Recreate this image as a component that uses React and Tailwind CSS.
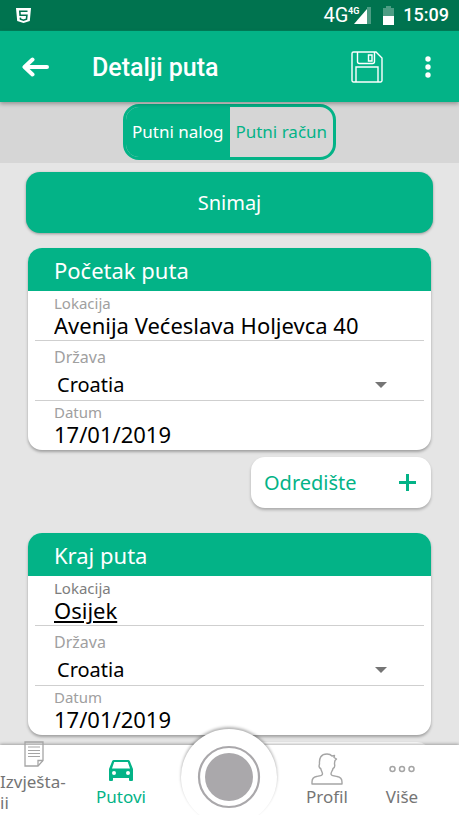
import { useState } from 'react';
import clsx from 'clsx';

const COUNTRIES = ['Croatia', 'Slovenia', 'Austria'];

function StatusBar() {
  return (
    <div className="flex h-[31px] shrink-0 items-center justify-between border-b border-[#007e59] bg-[#00734f] pl-4 pr-[10px] text-white">
      <svg width="15" height="15" viewBox="0 0 15 15" aria-hidden="true">
        <path d="M0 0h15l-1.2 13L7.5 15 1.2 13z" fill="#fff" />
        <path d="M11.5 3.2H3.8l.3 4h6.8l-.4 4-3 1-3-1-.2-1.6" fill="none" stroke="#00734f" strokeWidth="1.6" />
      </svg>
      <div className="flex items-center">
        <span className="font-[Roboto,sans-serif] text-xl leading-6">4G</span>
        <svg width="24" height="20" viewBox="0 0 24 20" aria-hidden="true">
          <path d="M19 2h4v17h-4z" fill="#4d9d84" />
          <path d="M19 4v15H6z" fill="#fff" />
          <text x="0" y="9" fill="#fff" fontFamily="Roboto, sans-serif" fontSize="9" fontWeight="700">4G</text>
        </svg>
        <svg className="ml-[11px]" width="11" height="19" viewBox="0 0 11 19" aria-hidden="true">
          <path d="M3 0h5v2h3v8H0V2h3z" fill="#4d9d84" />
          <path d="M0 10h11v9H0z" fill="#fff" />
        </svg>
        <span className="ml-[9px] font-[Roboto,sans-serif] text-lg font-medium leading-6">15:09</span>
      </div>
    </div>
  );
}

function TopBar() {
  return (
    <header className="relative z-10 flex h-[71px] shrink-0 items-center bg-[#03b387] pl-[22px] pr-6 text-white shadow-[0_2px_4px_rgba(0,0,0,0.3)]">
      <button type="button" aria-label="Natrag">
        <svg width="28" height="20" viewBox="0 0 28 20" fill="none" stroke="currentColor" strokeWidth="4" strokeLinecap="round" strokeLinejoin="round">
          <path d="M25 10H3M10.5 2.500L2.500 10l8 7.500" />
        </svg>
      </button>
      <h1 className="ml-[42px] flex-1 pt-[2px] font-[Roboto,sans-serif] text-[25px] font-medium">Detalji puta</h1>
      <button type="button" aria-label="Spremi">
        <svg width="32" height="32" viewBox="0 0 32 32" fill="none" stroke="currentColor" strokeWidth="1.4">
          <path d="M2.500 1H25l6 6v22.500a1.500 1.500 0 0 1-1.500 1.500h-27A1.500 1.500 0 0 1 1 29.500v-27A1.500 1.500 0 0 1 2.500 1z" />
          <path d="M6.500 1v9.500a2 2 0 0 0 2 2h13a2 2 0 0 0 2-2V1" />
          <path d="M17.500 4h3.500v6h-3.500z" />
          <path d="M5 31V16h22v15" />
        </svg>
      </button>
      <button type="button" aria-label="Izbornik" className="ml-[38px] px-1">
        <svg width="6" height="22" viewBox="0 0 6 22" fill="currentColor">
          <circle cx="3" cy="3" r="2.700" />
          <circle cx="3" cy="11" r="2.700" />
          <circle cx="3" cy="19" r="2.700" />
        </svg>
      </button>
    </header>
  );
}

function Segments({ value, onChange }) {
  return (
    <div className="flex h-[61px] shrink-0 justify-center bg-[#d6d6d6] pb-[3px] pt-[2px]">
      <div className="flex w-[213px] overflow-hidden rounded-2xl border-[3px] border-[#03b387] text-[17px]">
        {['Putni nalog', 'Putni račun'].map((label) => (
          <button
            key={label}
            type="button"
            onClick={() => onChange(label)}
            className={clsx(
              'flex-1 whitespace-nowrap',
              value === label ? 'bg-[#03b387] text-white' : 'text-[#03b387]'
            )}
          >
            {label}
          </button>
        ))}
      </div>
    </div>
  );
}

function TripCard({ id, title, location, underlined }) {
  return (
    <section className="overflow-hidden rounded-[14px] bg-white shadow-[0_2px_3px_rgba(0,0,0,0.3)]">
      <h2 className="h-[43px] bg-[#03b387] pl-[26px] text-[22px] leading-[44px] text-white">{title}</h2>
      <div className="px-[7px]">
        <div className="h-[50px] border-b border-[#cfcfcf] pl-[19px] pt-1">
          <label
            htmlFor={`${id}-location`}
            className={clsx('block text-[15px] leading-4', underlined ? 'text-[#7d7d7d]' : 'text-[#a0a0a0]')}
          >
            Lokacija
          </label>
          <input
            id={`${id}-location`}
            type="text"
            defaultValue={location}
            className={clsx('block h-7 w-full text-[22px] leading-7 text-black outline-none', underlined && 'underline')}
          />
        </div>
        <div className="h-[60px] border-b border-[#cfcfcf] pl-[19px] pt-1.5">
          <label htmlFor={`${id}-country`} className="block text-base leading-5 text-[#a0a0a0]">Država</label>
          <div className="flex items-center pr-[37px] pt-1">
            <select
              id={`${id}-country`}
              defaultValue="Croatia"
              className="h-7 flex-1 appearance-none bg-transparent pl-[3px] text-xl leading-7 text-black outline-none"
            >
              {COUNTRIES.map((c) => (
                <option key={c}>{c}</option>
              ))}
            </select>
            <svg width="12" height="6" viewBox="0 0 12 6" aria-hidden="true">
              <path d="M0 0h12L6 6z" fill="#757575" />
            </svg>
          </div>
        </div>
        <div className="h-[49px] pl-[19px] pt-[3px]">
          <label htmlFor={`${id}-date`} className="block text-[15px] leading-4 text-[#a0a0a0]">Datum</label>
          <input
            id={`${id}-date`}
            type="text"
            defaultValue="17/01/2019"
            className="block h-7 w-full text-[22px] leading-7 text-black outline-none"
          />
        </div>
      </div>
    </section>
  );
}

function AddDestination() {
  return (
    <button
      type="button"
      className="flex h-[51px] w-[180px] items-center justify-between rounded-[14px] bg-white pl-[13px] pr-[15px] text-xl text-[#03b387] shadow-[0_2px_3px_rgba(0,0,0,0.25)]"
    >
      Odredište
      <svg width="17" height="17" viewBox="0 0 17 17" stroke="currentColor" strokeWidth="3" aria-hidden="true">
        <path d="M8.500 0v17M0 8.500h17" />
      </svg>
    </button>
  );
}

function BottomNav() {
  return (
    <nav className="relative z-10 grid h-[70px] shrink-0 grid-cols-[68fr_106fr_110fr_86fr_64fr] bg-white pr-[25px] text-[17px] leading-[21px] text-[#757575] shadow-[0_-1px_3px_rgba(0,0,0,0.3)]">
      <a href="#izvjestaji" className="-mt-1 flex flex-col items-center">
        <svg width="20" height="26" viewBox="0 0 20 26" fill="none" stroke="#a5a5a5" strokeWidth="1.300" className="shrink-0">
          <path d="M1 1h18v18.500L14 25H1z" />
          <path d="M19 19.500h-5V25" />
          <path d="M4 6h12M4 9.500h12M4 12.500h12M4 15.500h12" strokeWidth="1" />
        </svg>
        <span className="mt-1 w-full">
          Izvješta-
          <br />
          ii
        </span>
      </a>
      <a href="#putovi" className="flex flex-col items-center pt-[15px] text-[#03b387]">
        <svg width="24" height="21" viewBox="0 0 24 21" fill="currentColor">
          <path
            fillRule="evenodd"
            d="M5 0h14a2 2 0 0 1 1.900 1.300L24 9v11a1 1 0 0 1-1 1h-2a1 1 0 0 1-1-1v-2H4v2a1 1 0 0 1-1 1H1a1 1 0 0 1-1-1V9l3.100-7.700A2 2 0 0 1 5 0zM5.200 2L3 8.500h18L18.800 2zM5 11a2 2 0 1 0 0 4 2 2 0 0 0 0-4zM19 11a2 2 0 1 0 0 4 2 2 0 0 0 0-4z"
          />
        </svg>
        <span className="mt-[5px]">Putovi</span>
      </a>
      <button
        type="button"
        aria-label="Snimi"
        className="-mt-4 flex size-24 items-center justify-center justify-self-center rounded-full bg-white shadow-[0_-2px_3px_rgba(0,0,0,0.3)]"
      >
        <svg width="64" height="64" viewBox="0 0 64 64">
          <circle cx="32" cy="32" r="30" fill="none" stroke="#aaa8ab" strokeWidth="2.200" />
          <circle cx="32" cy="32" r="24" fill="#aaa8ab" />
        </svg>
      </button>
      <a href="#profil" className="flex flex-col items-center pt-2">
        <svg width="32" height="32" viewBox="0 0 32 32" fill="none" stroke="#a5a5a5" strokeWidth="1.400" strokeLinejoin="round">
          <path d="M1 31v-2c0-3 1.500-5 4.500-5.500 4-.6 6-.8 6-2.500 0-2-1.300-3-1.800-5.500-1.700-.6-2-2.500-1.200-4.500C8 5 10 1 16 1c2.500 0 4 .8 5 2l2.500-.5-.5 2 2.500 1.500-1.500 1.500c-.3 1.500-.5 2-.5 3.500.5 2-.2 4-1.500 4.500-.5 2.500-2 3.500-2 5.500 0 1.700 2 1.900 6 2.500 3 .5 5 2.500 5 5.500v2z" />
        </svg>
        <span className="mt-px">Profil</span>
      </a>
      <a href="#vise" className="flex flex-col items-center pt-5">
        <svg width="26" height="8" viewBox="0 0 26 8" fill="none" stroke="#a5a5a5" strokeWidth="1.500">
          <circle cx="3.500" cy="4" r="2.500" />
          <circle cx="13" cy="4" r="2.500" />
          <circle cx="22.500" cy="4" r="2.500" />
        </svg>
        <span className="mt-[13px]">Više</span>
      </a>
    </nav>
  );
}

export default function App() {
  const [tab, setTab] = useState('Putni nalog');

  return (
    <div className="flex h-dvh flex-col overflow-hidden bg-[#e5e5e5] font-['Noto_Sans',sans-serif]">
      <StatusBar />
      <TopBar />
      <Segments value={tab} onChange={setTab} />
      <main className="flex min-h-0 flex-1 flex-col overflow-hidden px-[26px] pt-[9px]">
        <button
          type="button"
          className="h-[61px] shrink-0 rounded-[14px] bg-[#03b387] text-xl text-white shadow-[0_1px_3px_rgba(0,0,0,0.35)]"
        >
          Snimaj
        </button>
        <div className="flex flex-col px-[2px] pt-[15px]">
          <TripCard id="start" title="Početak puta" location="Avenija Većeslava Holjevca 40" />
          <div className="flex justify-end pb-[25px] pt-[7px]">
            <AddDestination />
          </div>
          <TripCard id="end" title="Kraj puta" location="Osijek" underlined />
          <div className="mt-[7px] h-[51px] w-[180px] self-end rounded-[14px] bg-white" />
        </div>
      </main>
      <BottomNav />
    </div>
  );
}
